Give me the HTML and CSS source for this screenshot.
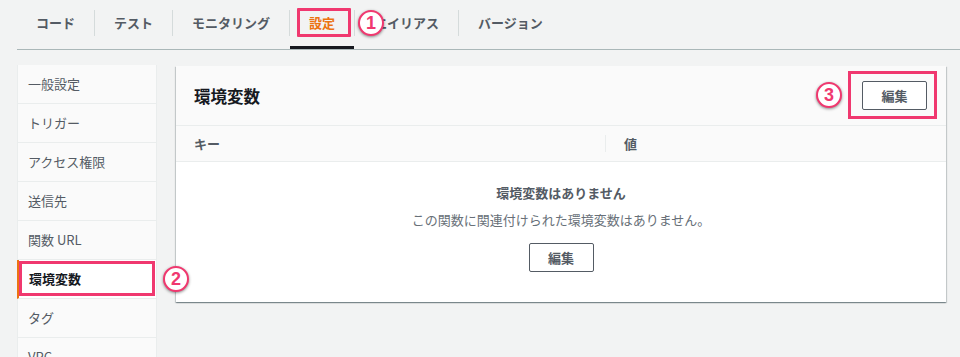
FILE: index.html
```html
<!DOCTYPE html>
<html lang="ja">
<head>
<meta charset="utf-8">
<link rel="stylesheet" href="styles.css">
</head>
<body>
<nav class="tabs">
  <div class="tab">コード</div>
  <span class="sep"></span>
  <div class="tab">テスト</div>
  <span class="sep"></span>
  <div class="tab">モニタリング</div>
  <span class="sep"></span>
  <div class="tab active"><span class="hl">設定<span class="badge b1">1</span></span></div>
  <span class="sep"></span>
  <div class="tab">エイリアス</div>
  <span class="sep"></span>
  <div class="tab">バージョン</div>
</nav>
<div class="main">
  <ul class="side">
    <li class="item">一般設定</li>
    <li class="item">トリガー</li>
    <li class="item">アクセス権限</li>
    <li class="item">送信先</li>
    <li class="item">関数 URL</li>
    <li class="item selected">環境変数<span class="box"></span><span class="badge b2">2</span></li>
    <li class="item">タグ</li>
    <li class="item">VPC</li>
  </ul>
  <section class="panel">
    <header class="panel-head">
      <h2 class="title">環境変数</h2>
      <div class="annot">
        <button class="btn">編集</button>
        <span class="box3"></span>
        <span class="badge b3">3</span>
      </div>
    </header>
    <div class="cols">
      <div class="col">キー</div>
      <div class="col col2">値</div>
    </div>
    <div class="empty">
      <div class="empty-title">環境変数はありません</div>
      <div class="empty-sub">この関数に関連付けられた環境変数はありません。</div>
      <button class="btn">編集</button>
    </div>
  </section>
</div>
</body>
</html>
```
FILE: styles.css
```css
* { box-sizing: border-box; }
html, body { margin: 0; padding: 0; }
body {
  background: #f2f3f3;
  font-family: "Noto Sans CJK JP", "Noto Sans", sans-serif;
  color: #545b64;
  width: 960px;
  height: 357px;
  overflow: hidden;
}
.tabs {
  display: flex;
  align-items: center;
  margin-left: 17px;
  height: 50px;
  border-bottom: 1px solid #aab7b8;
}
.tab {
  position: relative;
  height: 49px;
  padding: 0 19px 4px;
  display: flex;
  align-items: center;
  font-size: 13px;
  font-weight: 700;
  color: #545b64;
}
.sep {
  width: 1px;
  height: 26px;
  background: #d5dbdb;
  margin-bottom: 3px;
}
.tab.active { color: #ec7211; }
.tab.active::after {
  content: "";
  position: absolute;
  left: 0;
  right: 0;
  bottom: 0;
  height: 3px;
  background: #16191f;
}
.hl { position: relative; line-height: 18px; }
.hl::before {
  content: "";
  position: absolute;
  left: -12px;
  right: -16px;
  top: -6px;
  bottom: -5px;
  border: 3px solid #f0386f;
  border-radius: 1px;
}
.badge {
  position: absolute;
  width: 26px;
  height: 26px;
  border-radius: 50%;
  background: #fff;
  border: 2px solid #f0386f;
  color: #f0386f;
  font-family: "Liberation Sans", sans-serif;
  font-weight: 700;
  font-size: 18px;
  line-height: 22px;
  text-align: center;
  box-shadow: 0 1px 3px rgba(0,0,0,.45);
  z-index: 5;
}
.b1 { left: 49px; top: -4px; }
.main {
  display: flex;
  align-items: flex-start;
  gap: 19px;
  padding: 15px 14px 0 17px;
}
.side {
  list-style: none;
  margin: 0;
  padding: 0;
  width: 140px;
  flex: none;
  background: #fafafa;
  border-left: 1px solid #eaeded;
  border-right: 1px solid #eaeded;
}
.item {
  position: relative;
  height: 39px;
  border-bottom: 1px solid #eaeded;
  padding-left: 10px;
  font-size: 13px;
  line-height: 38px;
  color: #545b64;
}
.item.selected {
  background: #fff;
  font-weight: 700;
  color: #16191f;
  border-left: 2px solid #ec7211;
  margin-left: -1px;
  padding-left: 10px;
}
.box {
  position: absolute;
  left: 0;
  right: 1px;
  top: 1px;
  bottom: 2px;
  border: 3px solid #f0386f;
}
.b2 { left: 144px; top: 6px; }
.panel {
  flex: 1;
  margin-top: 1px;
  background: #fff;
  box-shadow: 0 1px 1px 0 rgba(0,28,36,.3), 1px 1px 1px 0 rgba(0,28,36,.15), -1px 1px 1px 0 rgba(0,28,36,.15);
}
.panel-head {
  height: 60px;
  display: flex;
  align-items: center;
  justify-content: space-between;
  padding: 0 19px 0 18px;
  background: #fafafa;
  border-bottom: 1px solid #eaeded;
}
.title {
  margin: 0;
  font-size: 16.5px;
  font-weight: 700;
  color: #16191f;
}
.annot { position: relative; display: flex; }
.btn {
  width: 65px;
  height: 29px;
  border: 1px solid #545b64;
  border-radius: 2px;
  background: #fff;
  font-family: "Noto Sans CJK JP", sans-serif;
  font-size: 13px;
  font-weight: 700;
  color: #545b64;
  padding: 0;
}
.box3 {
  position: absolute;
  left: -14px;
  right: -10px;
  top: -10px;
  bottom: -9px;
  border: 3px solid #f0386f;
}
.b3 { left: -46px; top: 1px; }
.cols {
  display: grid;
  grid-template-columns: 429px 1fr;
  height: 36px;
  align-items: center;
  background: #fafafa;
  border-bottom: 1px solid #eaeded;
}
.col {
  padding-left: 18px;
  font-size: 13px;
  font-weight: 700;
  color: #545b64;
}
.col2 {
  border-left: 1px solid #eaeded;
  line-height: 17px;
}
.empty {
  display: flex;
  flex-direction: column;
  align-items: center;
  padding: 21px 0 30px;
}
.empty-title {
  font-size: 13px;
  font-weight: 700;
  line-height: 20px;
  color: #545b64;
}
.empty-sub {
  margin-top: 7px;
  font-size: 13px;
  line-height: 20px;
  color: #687078;
}
.empty .btn { margin-top: 13px; }
```
